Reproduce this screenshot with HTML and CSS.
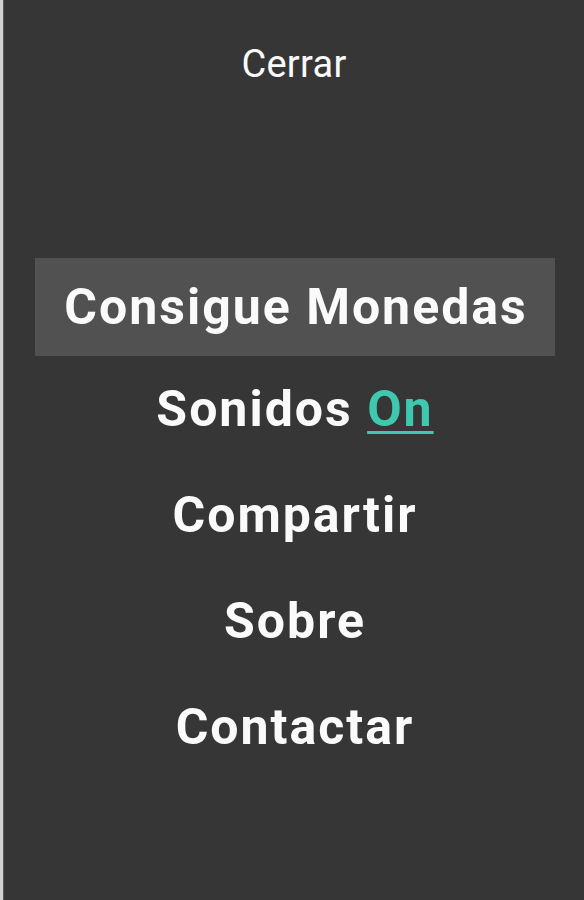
FILE: index.html
```html
<!DOCTYPE html>
<html lang="es">
<head>
<meta charset="utf-8">
<title>Menú</title>
<link rel="stylesheet" href="styles.css">
</head>
<body>
<div class="screen">
  <div class="close">Cerrar</div>
  <nav class="menu">
    <div class="item active">Consigue Monedas</div>
    <div class="item">Sonidos <span class="on">On</span></div>
    <div class="item">Compartir</div>
    <div class="item">Sobre</div>
    <div class="item">Contactar</div>
  </nav>
</div>
</body>
</html>
```
FILE: styles.css
```css
html, body {
  margin: 0;
  padding: 0;
  height: 100%;
  background: #363636;
}
body {
  border-left: 3px solid #d2d2d2;
  box-sizing: border-box;
}
.screen {
  min-height: 900px;
  border-left: 1px solid #5a5a5a;
  background: #363636;
  font-family: Roboto, "Noto Sans", sans-serif;
  color: #fafafa;
  text-align: center;
}
.close {
  padding-top: 45px;
  font-size: 38px;
  line-height: 38px;
  font-weight: 400;
  letter-spacing: 0.3px;
}
.menu {
  margin-top: 175px;
  display: flex;
  flex-direction: column;
}
.item {
  font-size: 50px;
  font-weight: 700;
  line-height: 106px;
  height: 106px;
  letter-spacing: 2px;
  padding-left: 2px;
}
.item.active {
  margin: 0 29px 0 31px;
  height: 98px;
  line-height: 98px;
  background: #515151;
}
.on {
  color: #3fc8b0;
  text-decoration: underline;
  text-decoration-thickness: 3px;
  text-underline-offset: 5px;
}
```
